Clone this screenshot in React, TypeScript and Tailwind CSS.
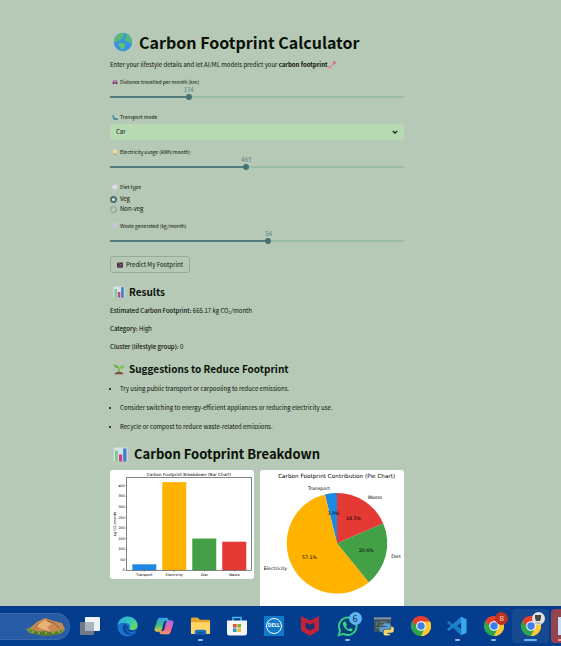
import { useState } from "react";
import type { CSSProperties, ReactNode } from "react";

function Globe() {
  return (
    <svg viewBox="0 0 20 20" className="h-5 w-5">
      <circle cx="10" cy="10" r="9.2" fill="#3493e0" />
      <path d="M3 4.5C5 2 8.500 .8 11 1l1 1.500-2 1 .5 2-2.500 1.500L7 9 4.500 8.500 3.500 11 1.200 9.500C1 7.500 2 5.800 3 4.500z" fill="#5cb87a" />
      <path d="M12 3.500l3-1.200c2.500 1.700 4 4.500 4 7.500l-2 2.500-1.500-2.800-3 .3-1.500-2.300 2-1.500z" fill="#56b880" />
      <path d="M6 10.500l4 .5 2.500 2-1.500 3-2.500 2.500-1.500-3.500-1.500-2z" fill="#63bd73" />
    </svg>
  );
}

function BarsIcon({ className }: { className: string }) {
  return (
    <svg viewBox="0 0 16 16" className={className}>
      <rect x=".5" y=".5" width="15" height="15" rx="1" fill="#d5e3e4" />
      <rect x="2" y="4" width="3.400" height="11.500" fill="#7fc99a" />
      <rect x="6.400" y="8" width="3.400" height="7.500" fill="#d83c7c" />
      <rect x="10.800" y="1.500" width="3.600" height="14" fill="#3f82cc" />
    </svg>
  );
}

function Sprout() {
  return (
    <svg viewBox="0 0 16 16" className="h-3 w-3">
      <path d="M2 15c1-2.500 3.500-3.500 6-3.500s5 1 6 3.500z" fill="#7b4b34" />
      <path d="M8 12.500V7" stroke="#5fa53c" strokeWidth="1.500" />
      <path d="M8 7C7 3 4 1.500 .5 2 1.500 5.500 4 7.500 8 7z" fill="#6bb445" />
      <path d="M8 7.500c.5-3.500 3.500-5 7.500-4C14.500 7 12 8.500 8 7.500z" fill="#82c553" />
    </svg>
  );
}

function CarIcon() {
  return (
    <svg viewBox="0 0 12 12" className="h-1.5 w-1.5">
      <path d="M1 9V6l2-3.500h6L11 6v3z" fill="#a5408c" />
      <path d="M3 5.500L4 3.500h4l1 2z" fill="#9cc3dd" />
      <circle cx="3" cy="9" r="1.500" fill="#353052" />
      <circle cx="9" cy="9" r="1.500" fill="#353052" />
    </svg>
  );
}

function TransportIcon() {
  return (
    <svg viewBox="0 0 12 12" className="h-1.5 w-1.5">
      <path d="M0 2l4 1 1 4 6 1v2H3L1 7z" fill="#4d93b8" />
      <path d="M3 10.500h9" stroke="#38525d" strokeWidth="1.500" />
      <circle cx="9" cy="6" r="1.500" fill="#d8e8ee" />
    </svg>
  );
}

function BulbIcon() {
  return (
    <svg viewBox="0 0 12 12" className="h-1.5 w-1.5">
      <circle cx="6" cy="5" r="4.500" fill="#f1dc9a" />
      <rect x="4" y="8.500" width="4" height="3.500" fill="#c9a860" />
    </svg>
  );
}

function PlateIcon() {
  return (
    <svg viewBox="0 0 12 12" className="h-1.5 w-1.5">
      <rect x=".5" y="1" width="11" height="10" rx="3" fill="#d4d3e2" />
      <circle cx="6" cy="6" r="3" fill="#e4e3ee" />
    </svg>
  );
}

function BinIcon() {
  return (
    <svg viewBox="0 0 12 12" className="h-1.5 w-1.5">
      <path d="M1 1h10l-1.500 10.500h-7z" fill="#cfcfdb" />
      <path d="M4 3l.5 7M8 3l-.5 7" stroke="#a9a9bd" />
    </svg>
  );
}

function SparkIcon() {
  return (
    <svg viewBox="0 0 16 16" className="h-2 w-2">
      <path d="M9 1h6v6l-2-2-3.500 3.500L8 7l3.500-3.500z" fill="#e4577a" />
      <path d="M1 9l2 1.500L6.500 8 8 9.500 5 13l2 2H1z" fill="#eb7f97" />
    </svg>
  );
}

function ModelIcon() {
  return (
    <svg viewBox="0 0 12 12" className="h-1.5 w-1.5">
      <rect x="0" y="1" width="12" height="10.500" rx="2" fill="#4a2c40" />
      <path d="M3 4l2-1 3 3 2-2M3 9l3-2 3 2" stroke="#c9a6b6" fill="none" />
    </svg>
  );
}

function FieldLabel({ id, icon, children }: { id: string; icon: ReactNode; children: ReactNode }) {
  return (
    <label htmlFor={id} className="flex h-2.5 items-center gap-0.5 pl-0.5 text-[5px] leading-[10px]">
      {icon}
      <span>{children}</span>
    </label>
  );
}

function SliderField(props: { id: string; icon: ReactNode; label: string; max: number; initial: number }) {
  const [value, setValue] = useState(props.initial);
  const at = `calc(3px + (100% - 6px) * ${value / props.max})`;
  const track: CSSProperties = {
    backgroundImage: `linear-gradient(to right, #4f7b7c ${at}, #9cbda4 ${at})`,
  };
  return (
    <div>
      <FieldLabel id={props.id} icon={props.icon}>{props.label}</FieldLabel>
      <div className="relative h-1.5">
        <output htmlFor={props.id} className="absolute -translate-x-1/2 text-[6px] leading-[6px] text-[#5b8583]" style={{ left: at }}>
          {value}
        </output>
      </div>
      <input
        id={props.id}
        type="range"
        min={0}
        max={props.max}
        value={value}
        onChange={(e) => setValue(Number(e.target.value))}
        style={track}
        className="block h-[7px] w-full appearance-none bg-[length:100%_2px] bg-center bg-no-repeat [&::-webkit-slider-thumb]:size-1.5 [&::-webkit-slider-thumb]:appearance-none [&::-webkit-slider-thumb]:rounded-full [&::-webkit-slider-thumb]:bg-[#457273]"
      />
    </div>
  );
}

const sources = [
  { name: "Transport", value: 28.1, color: "#1e88e5", share: "3.9%" },
  { name: "Electricity", value: 416.7, color: "#ffb300", share: "57.1%" },
  { name: "Diet", value: 150, color: "#43a047", share: "20.6%" },
  { name: "Waste", value: 135, color: "#e53935", share: "18.5%" },
];

function BarChart() {
  const y = (v: number) => 100.3 - v * 0.2115;
  return (
    <svg viewBox="0 0 144 109" className="block w-full font-['DejaVu_Sans',sans-serif]" role="img" aria-label="Carbon Footprint Breakdown">
      <text x="79" y="5.700" fontSize="4.200" textAnchor="middle">Carbon Footprint Breakdown (Bar Chart)</text>
      {sources.map((s, i) => (
        <g key={s.name}>
          <rect x={22.3 + i * 30} y={y(s.value)} width="24" height={s.value * 0.2115} fill={s.color} />
          <path d={`M${34.3 + i * 30} 100.3v1.2`} stroke="#222" strokeWidth=".5" />
          <text x={34.3 + i * 30} y="105.700" fontSize="3.500" textAnchor="middle">{s.name}</text>
        </g>
      ))}
      {[0, 50, 100, 150, 200, 250, 300, 350, 400].map((v) => (
        <g key={v}>
          <path d={`M15.500 ${y(v)}h1.200`} stroke="#222" strokeWidth=".5" />
          <text x="14.800" y={y(v) + 1.200} fontSize="3.500" textAnchor="end">{v}</text>
        </g>
      ))}
      <rect x="16.700" y="7.700" width="125" height="92.600" fill="none" stroke="#333" strokeWidth=".6" />
      <text transform="translate(5.500 54) rotate(-90)" fontSize="3.500" textAnchor="middle">kg CO₂/month</text>
    </svg>
  );
}

const nameSpots = [[59, 19.9], [15.500, 99.9], [136, 88.300], [115, 28.900]];
const shareSpots = [[73.5, 45.300], [49.500, 88.900], [106.300, 82.300], [93.500, 49.600]];

function PieChart() {
  const total = sources.reduce((sum, s) => sum + s.value, 0);
  const cx = 77;
  const cy = 73.3;
  const r = 50.3;
  let turned = 0;
  const slices = sources.map((s) => {
    const a = (turned / total) * 2 * Math.PI;
    turned += s.value;
    const b = (turned / total) * 2 * Math.PI;
    const large = b - a > Math.PI ? 1 : 0;
    return `M${cx} ${cy}L${cx - r * Math.sin(a)} ${cy - r * Math.cos(a)}A${r} ${r} 0 ${large} 0 ${cx - r * Math.sin(b)} ${cy - r * Math.cos(b)}Z`;
  });
  return (
    <svg viewBox="0 0 144 144" className="block w-full font-['DejaVu_Sans',sans-serif]" role="img" aria-label="Carbon Footprint Contribution">
      <text x="76.700" y="8" fontSize="5.700" textAnchor="middle">Carbon Footprint Contribution (Pie Chart)</text>
      {sources.map((s, i) => (
        <path key={s.name} d={slices[i]} fill={s.color} />
      ))}
      {sources.map((s, i) => (
        <g key={s.name} fontSize="4.700" textAnchor="middle">
          <text x={nameSpots[i][0]} y={nameSpots[i][1]}>{s.name}</text>
          <text x={shareSpots[i][0]} y={shareSpots[i][1]}>{s.share}</text>
        </g>
      ))}
    </svg>
  );
}

function ChromeIcon() {
  return (
    <svg viewBox="0 0 24 24" className="size-5">
      <path d="M12 12L1.600 6A12 12 0 0 1 22.400 6z" fill="#e3402f" />
      <path d="M12 12L22.400 6A12 12 0 0 1 12 24z" fill="#fcc934" />
      <path d="M12 12v12A12 12 0 0 1 1.600 6z" fill="#2da44e" />
      <path d="M12 6.500h10.700L22.400 6H12z" fill="#e3402f" />
      <path d="M7.200 14.700L1.600 6l5.600 0 4.800 6zM16.800 14.700L12 24l-2-6z" fill="#2da44e" />
      <path d="M1.600 6A12 12 0 0 1 22.400 6.500H12L7 9.200 5 11z" fill="#e3402f" />
      <path d="M12 6.500h10.700a12 12 0 0 1-10.700 17.500l4.800-9.200z" fill="#fcc934" />
      <circle cx="12" cy="12" r="5.800" fill="#fff" />
      <circle cx="12" cy="12" r="4.500" fill="#3c7fe8" />
    </svg>
  );
}

function TaskButton({ label, running, children }: { label: string; running?: boolean; children: ReactNode }) {
  return (
    <button type="button" aria-label={label} className="relative flex h-10 min-w-0 flex-1 items-center justify-center">
      {children}
      {running && <span className="absolute bottom-[5px] h-0.5 w-[5px] rounded-full bg-[#9db9dd]" />}
    </button>
  );
}

function Taskbar() {
  return (
    <footer className="flex h-10 shrink-0 items-center overflow-hidden bg-[#053d8e] font-['Open_Sans',sans-serif]">
      <button type="button" aria-label="Search" className="mr-0.5 flex h-[27px] w-[70px] shrink-0 items-center justify-end rounded-r-full border border-l-0 border-[#3968ad] bg-[#285ba6] pr-0.5">
        <svg viewBox="0 0 42 20" className="h-5 w-[42px]">
          <path d="M1 13l8-3 24-1 7 5-4 4-16 2-16-3z" fill="#77943a" />
          <path d="M5 12l7-6 8-4 9 3 8 2 3 6-9 2-13 2-8-3z" fill="#c78b52" />
          <path d="M11 10l9-6 7 4-5 3 3 4-8-2z" fill="#e6b278" />
          <path d="M22 5l7 2 6 6M14 7l-4 5" stroke="#965d3b" fill="none" />
          <path d="M4 14l8 2 8-1 9 2 8-3-2 4-13 2-13-2z" fill="#517a30" />
          <path d="M7 16h2M13 17h2M20 17h2M27 17h2M33 16h2" stroke="#d9c34d" />
        </svg>
      </button>
      <TaskButton label="Task view">
        <svg viewBox="0 0 20 20" className="size-5">
          <rect x="5" y="1" width="15" height="14" rx="1" fill="#eef1f5" />
          <rect x="0" y="6" width="14" height="13" rx="1" fill="#707a88" />
          <path d="M5 6h9v9H5z" fill="#aeb4bc" />
        </svg>
      </TaskButton>
      <TaskButton label="Edge">
        <svg viewBox="0 0 24 24" className="size-[21px]">
          <defs>
            <linearGradient id="edgeTop" x1="0" y1="0" x2="1" y2=".6">
              <stop offset="0" stopColor="#2ca6e0" />
              <stop offset=".6" stopColor="#36c5c0" />
              <stop offset="1" stopColor="#64d860" />
            </linearGradient>
          </defs>
          <circle cx="12" cy="12" r="11.500" fill="#1976cf" />
          <path d="M.6 11C1.500 4.500 6.500.5 12 .5c6.500 0 11.500 4.700 11.500 10 0 3.500-2.700 5.500-6 5.500-2.500 0-3.800-1-3.300-2 1.300-2 .8-5.500-3.200-6C6 7 1.500 8 .6 11z" fill="url(#edgeTop)" />
          <path d="M9 9c-3 2-3.500 6-1 9.500 2.500 3.200 7.500 4 12 1.500-4.500 1-8-1-9-4-.8-2.500 0-4 1-5-1-1.500-2-2-3-2z" fill="#0e4a9c" />
          <path d="M12.500 12c-1.500 2.500.5 5.500 4.500 5.500 2 0 3.500-.5 5.500-1.500" fill="none" stroke="#053d8e" strokeWidth="1.500" />
        </svg>
      </TaskButton>
      <TaskButton label="Copilot">
        <svg viewBox="0 0 24 24" className="size-5">
          <defs>
            <linearGradient id="copilotLeft" x1="0" y1="0" x2="0" y2="1">
              <stop offset="0" stopColor="#2aa4ef" />
              <stop offset=".55" stopColor="#43ba81" />
              <stop offset="1" stopColor="#f1c93b" />
            </linearGradient>
            <linearGradient id="copilotRight" x1="0" y1="0" x2="0" y2="1">
              <stop offset="0" stopColor="#aa6cec" />
              <stop offset=".6" stopColor="#ed6397" />
              <stop offset="1" stopColor="#ff9b63" />
            </linearGradient>
          </defs>
          <path d="M7 2h8c2 0 2 2 3 4h-4c-2 0-2 1-3 4l-1 5c-1 3-2 4-4 4H4c-3 0-4-2-3-5L4 5c.5-2 1.500-3 3-3z" fill="url(#copilotLeft)" />
          <path d="M17 22H9c-2 0-2-2-3-4h4c2 0 2-1 3-4l1-5c1-3 2-4 4-4h2c3 0 4 2 3 5l-3 9c-.5 2-1.500 3-3 3z" fill="url(#copilotRight)" />
        </svg>
      </TaskButton>
      <TaskButton label="File Explorer" running>
        <svg viewBox="0 0 22 20" className="h-5 w-[21px]">
          <path d="M1 2.500Q1 1 2.500 1H8l2.500 2.500H20q1 0 1 1V10H1z" fill="#e5a42c" />
          <path d="M1 6h20v11.500q0 1-1 1H2q-1 0-1-1z" fill="#ffd466" />
          <path d="M5 19v-3q0-2 2-2h8q2 0 2 2v3z" fill="#1671bd" />
          <path d="M8 17h6" stroke="#0b4a84" strokeWidth="1.500" />
        </svg>
      </TaskButton>
      <TaskButton label="Microsoft Store">
        <svg viewBox="0 0 20 20" className="size-5">
          <path d="M6 5V1.500h8V5" stroke="#53b5ed" strokeWidth="1.500" fill="none" />
          <path d="M0 4.500h20V17q0 2.500-2.500 2.500h-15Q0 19.500 0 17z" fill="#f3f5f8" />
          <path d="M6 8h3.600v3.600H6z" fill="#e5532d" />
          <path d="M10.400 8H14v3.600h-3.600z" fill="#78b52b" />
          <path d="M6 12.400h3.600V16H6z" fill="#239fdc" />
          <path d="M10.400 12.400H14V16h-3.600z" fill="#f6b71d" />
        </svg>
      </TaskButton>
      <TaskButton label="Dell">
        <span className="flex size-5 items-center justify-center bg-[#1079ca]">
          <span className="flex size-4 items-center justify-center rounded-full border border-white text-[5px] font-bold text-white">DELL</span>
        </span>
      </TaskButton>
      <TaskButton label="McAfee">
        <svg viewBox="0 0 18 20" className="h-5 w-[18px]">
          <path d="M0 0l9 4.500L18 0v14.500L9 20l-9-5.500z" fill="#c32236" />
          <path d="M4.500 6.500L9 8.700l4.500-2.200v5.500L9 14.600 4.500 12z" fill="#1b3272" />
        </svg>
      </TaskButton>
      <TaskButton label="WhatsApp" running>
        <svg viewBox="0 0 24 24" className="size-[21px]">
          <path d="M2 22l1.500-5.500A10 10 0 1 1 7.500 20.500z" fill="#073f78" stroke="#2fd08a" strokeWidth="2.200" />
          <path d="M8 6.500c-2 1-1.500 4 1 7s6 5 8 3.500c1-1 1-1.700.5-2l-2.200-1.200-1.500 1.400c-1.800-.7-3-2-3.700-3.600l1.200-1.400-1.200-3.200c-.4-.9-1.300-1-2.100-.5z" fill="#35d794" />
        </svg>
        <span className="absolute top-[6px] right-1 flex size-[13px] items-center justify-center rounded-full bg-[#5cb6f4] text-[9px] leading-none text-[#092344]">6</span>
      </TaskButton>
      <TaskButton label="Python console">
        <svg viewBox="0 0 22 20" className="h-5 w-[21px]">
          <path d="M1 1h18v15H1z" fill="#3f5360" />
          <path d="M1 1h18v2H1z" fill="#8393a0" />
          <path d="M3 6l2 1.500L3 9M7 6h7M7 9h4M3 12h5" stroke="#74906a" fill="none" />
          <path d="M13 7h3q2.500 0 2.500 2.500v2q0 2-2 2H12q-2 0-2 2v1H8.500Q6.500 16 6.500 13.500T9 11h5v-1h-3.500V9q0-2 2.500-2z" fill="#5b9ed2" />
          <path d="M15.500 20h-2q-2.500 0-2.500-2v-2q0-2 2-2h4.500q1.500 0 1.500-2V10.500q3 0 3 3.200T19.500 17H15v1h3q0 2-2.500 2z" fill="#f6d66a" />
        </svg>
      </TaskButton>
      <TaskButton label="Chrome"><ChromeIcon /></TaskButton>
      <TaskButton label="Visual Studio Code" running>
        <svg viewBox="0 0 24 24" className="size-5">
          <path d="M17 1L5.500 12 17 23l1-6.500L11.500 12 18 7.500z" fill="#2488cf" />
          <path d="M0 8l2-2 16 12.500V23h-1z" fill="#1c78bd" />
          <path d="M0 16l2 2L18 5.500V1h-1z" fill="#1e83cb" />
          <path d="M17 1l6.500 3v16L17 23z" fill="#3aa8ee" />
        </svg>
      </TaskButton>
      <TaskButton label="Chrome, profile B" running>
        <ChromeIcon />
        <span className="absolute top-1.5 right-1 flex size-[13px] items-center justify-center rounded-full bg-[#bd321f] text-[7px] leading-none text-[#ffd9ce]">B</span>
      </TaskButton>
      <div className="flex h-[34px] min-w-0 flex-1 items-center rounded bg-[#16498f]">
        <TaskButton label="Chrome, current window">
          <ChromeIcon />
          <span className="absolute top-1.5 right-1 flex size-[13px] items-center justify-center rounded-full bg-[#dfe1e2]">
            <svg viewBox="0 0 12 12" className="size-3">
              <path d="M3 2h6v3L8 8H4L3 5z" fill="#4a4546" />
              <path d="M2 11q4-4 8 0z" fill="#b6b9bc" />
            </svg>
          </span>
          <span className="absolute bottom-[5px] h-0.5 w-[13px] rounded-full bg-[#62b9f6]" />
        </TaskButton>
      </div>
      <button type="button" aria-label="More" className="relative ml-0.5 h-[34px] w-2.5 shrink-0 rounded-l bg-[#93454f]">
        <span className="absolute top-2 right-0 h-[18px] w-[3px] bg-[#c9def0]" />
        <span className="absolute right-0 bottom-0.5 h-0.5 w-[3px] bg-[#f29a9a]" />
      </button>
    </footer>
  );
}

export default function App() {
  const [diet, setDiet] = useState("Veg");
  return (
    <div className="flex h-screen flex-col overflow-hidden bg-[#b6c8b6] font-['Noto_Sans_CJK_SC',sans-serif] text-[#0a1208]">
      <main className="min-h-0 flex-1 overflow-hidden pt-7 pr-[28%] pl-[110px] text-[6px] leading-[10px]">
        <h1 className="flex h-7 items-center gap-1.5 pl-[3px] text-[16px] leading-7 font-bold whitespace-nowrap">
          <Globe />
          Carbon Footprint Calculator
        </h1>
        <p className="mt-1 flex items-center whitespace-nowrap">
          <span>Enter your lifestyle details and let AI/ML models predict your <strong>carbon footprint</strong></span>
          <SparkIcon />
        </p>

        <form className="mt-[7px]" onSubmit={(e) => e.preventDefault()}>
          <SliderField id="distance" icon={<CarIcon />} label="Distance travelled per month (km)" max={510} initial={134} />
          <div className="mt-3">
            <FieldLabel id="mode" icon={<TransportIcon />}>Transport mode</FieldLabel>
            <div className="relative mt-0.5">
              <select id="mode" defaultValue="Car" className="block h-4 w-full appearance-none rounded-[3px] bg-[#b8dab3] px-1.5 text-[6px] leading-4">
                <option>Car</option>
                <option>Bus</option>
                <option>Train</option>
                <option>Bike</option>
              </select>
              <svg viewBox="0 0 8 8" className="pointer-events-none absolute top-[5px] right-1.5 size-1.5">
                <path d="M1 2.500l3 3 3-3" fill="none" stroke="#10190f" strokeWidth="1.800" />
              </svg>
            </div>
          </div>
          <div className="mt-[7px]">
            <SliderField id="electricity" icon={<BulbIcon />} label="Electricity usage (kWh/month)" max={1000} initial={463} />
          </div>
          <fieldset className="mt-3">
            <legend className="flex h-2.5 items-center gap-0.5 pl-0.5 text-[5px] leading-[10px]">
              <PlateIcon />
              Diet type
            </legend>
            <div className="mt-0.5">
              {["Veg", "Non-veg"].map((name) => (
                <label key={name} className="flex h-2.5 items-center gap-[3px] leading-[10px]">
                  <input
                    type="radio"
                    name="diet"
                    checked={diet === name}
                    onChange={() => setDiet(name)}
                    className="size-[7px] appearance-none rounded-full border border-[#7f9b86] checked:border-2 checked:border-[#457273] checked:bg-[#e3eee2]"
                  />
                  {name}
                </label>
              ))}
            </div>
          </fieldset>
          <div className="mt-[7px]">
            <SliderField id="waste" icon={<BinIcon />} label="Waste generated (kg/month)" max={100} initial={54} />
          </div>
          <button type="submit" className="mt-3 flex h-[17px] items-center gap-[3px] rounded-[3px] border border-[#94ab95] px-1.5 leading-[15px]">
            <ModelIcon />
            Predict My Footprint
          </button>
        </form>

        <section className="mt-[11px]">
          <h3 className="flex h-4 items-center gap-1 pl-[3px] text-[10px] leading-4 font-semibold">
            <BarsIcon className="size-3" />
            Results
          </h3>
          <div className="mt-1.5 flex flex-col gap-2">
            <p><strong className="font-medium">Estimated Carbon Footprint:</strong> 665.17 kg CO₂/month</p>
            <p><strong className="font-medium">Category:</strong> High</p>
            <p><strong className="font-medium">Cluster (lifestyle group):</strong> 0</p>
          </div>
        </section>

        <section className="mt-[9px]">
          <h3 className="flex h-4 items-center gap-1 pl-[3px] text-[10px] leading-4 font-semibold">
            <Sprout />
            Suggestions to Reduce Footprint
          </h3>
          <ul className="mt-[7px] flex list-disc flex-col gap-[9px] pl-2.5">
            <li>Try using public transport or carpooling to reduce emissions.</li>
            <li>Consider switching to energy-efficient appliances or reducing electricity use.</li>
            <li>Recycle or compost to reduce waste-related emissions.</li>
          </ul>
        </section>

        <section className="mt-3">
          <h2 className="flex h-5 items-center gap-1.5 pl-[3px] text-[13px] leading-5 font-semibold whitespace-nowrap">
            <BarsIcon className="size-[15px]" />
            Carbon Footprint Breakdown
          </h2>
          <div className="mt-1.5 grid grid-cols-2 items-start gap-1.5 text-[#222]">
            <div className="overflow-hidden rounded-[3px] bg-white"><BarChart /></div>
            <div className="overflow-hidden rounded-[3px] bg-white"><PieChart /></div>
          </div>
        </section>
      </main>
      <Taskbar />
    </div>
  );
}
